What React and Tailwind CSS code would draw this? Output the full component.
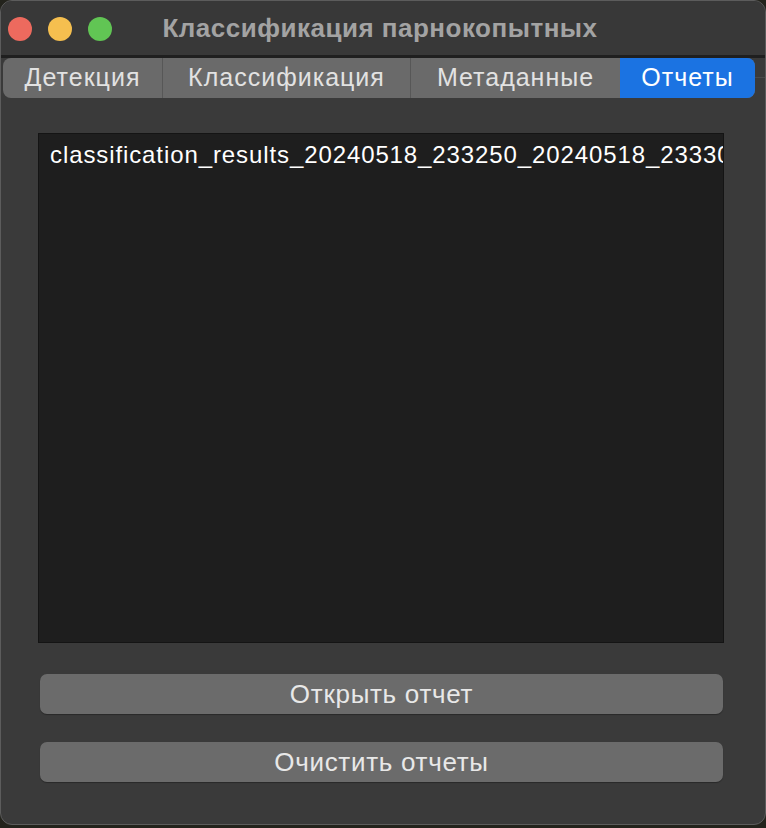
import React from 'react';

const tabs = [
    { label: 'Детекция', w: 'w-[159px]' },
    { label: 'Классификация', w: 'w-[248px]' },
    { label: 'Метаданные', w: 'w-[210px]' },
    { label: 'Отчеты', w: 'w-[135px]', active: true },
];

const App = () => {
    return (
        <div className="w-[766px] h-[828px] bg-[#23231c] overflow-hidden" style={{ fontFamily: '"Liberation Sans", Arial, sans-serif' }}>
            <div className="w-[766px] h-[825px] bg-[#3a3a3a] rounded-[12px] border border-[#5c5c5c] overflow-hidden flex flex-col">
                {/* title bar */}
                <div className="h-[54px] shrink-0 flex items-center relative bg-[#383838]">
                    <div className="flex items-center gap-[16px] pl-[7px] pt-[1px]">
                        <span className="w-[24px] h-[24px] rounded-full bg-[#ed6a5e]" />
                        <span className="w-[24px] h-[24px] rounded-full bg-[#f5bf4f]" />
                        <span className="w-[24px] h-[24px] rounded-full bg-[#61c554]" />
                    </div>
                    <div className="absolute left-0 right-0 top-0 h-full flex items-center justify-center">
                        <span className="text-[26px] font-bold tracking-[0.5px] text-[#a3a3a3] ml-[-6px]">Классификация парнокопытных</span>
                    </div>
                </div>
                <div className="h-[3px] shrink-0 bg-[#1f1f1f]" />

                {/* tabs */}
                <div className="relative shrink-0">
                    <div className="absolute left-[2px] right-0 top-[19px] h-[1px] bg-[#4a4a4a]" />
                    <div className="relative flex ml-[2px] w-[752px] h-[40px] rounded-[8px] overflow-hidden bg-[#6a6a6a]">
                        {tabs.map((t, i) => (
                            <div
                                key={t.label}
                                className={`${t.w} h-full flex items-center justify-center text-[25px] tracking-[1px] ${t.active ? 'bg-[#1b73e2] text-white' : 'text-[#e2e2e2]'} ${i > 0 && !t.active ? 'border-l border-[#575757]' : ''}`}
                            >
                                {t.label}
                            </div>
                        ))}
                    </div>
                </div>

                {/* reports pane */}
                <div className="flex-1 flex flex-col px-[37px] pt-[35px]">
                    <div className="h-[510px] w-[686px] bg-[#1e1e1e] border border-[#141414] overflow-hidden">
                        <div className="pl-[11px] pt-[6px] text-[24px] tracking-[0.9px] text-white whitespace-nowrap leading-[30px]">
                            classification_results_20240518_233250_20240518_233300.xlsx
                        </div>
                    </div>
                    <div className="flex flex-col gap-[28px] mt-[31px] pl-[2px] w-[685px]">
                        <button className="h-[40px] w-full rounded-[7px] bg-[#6b6b6b] text-[26px] tracking-[0.7px] text-[#e8e8e8] shadow-[0_1px_1px_rgba(0,0,0,0.3)]">
                            Открыть отчет
                        </button>
                        <button className="h-[40px] w-full rounded-[7px] bg-[#6b6b6b] text-[26px] tracking-[0.7px] text-[#e8e8e8] shadow-[0_1px_1px_rgba(0,0,0,0.3)]">
                            Очистить отчеты
                        </button>
                    </div>
                </div>
            </div>
        </div>
    );
};

export default App;
